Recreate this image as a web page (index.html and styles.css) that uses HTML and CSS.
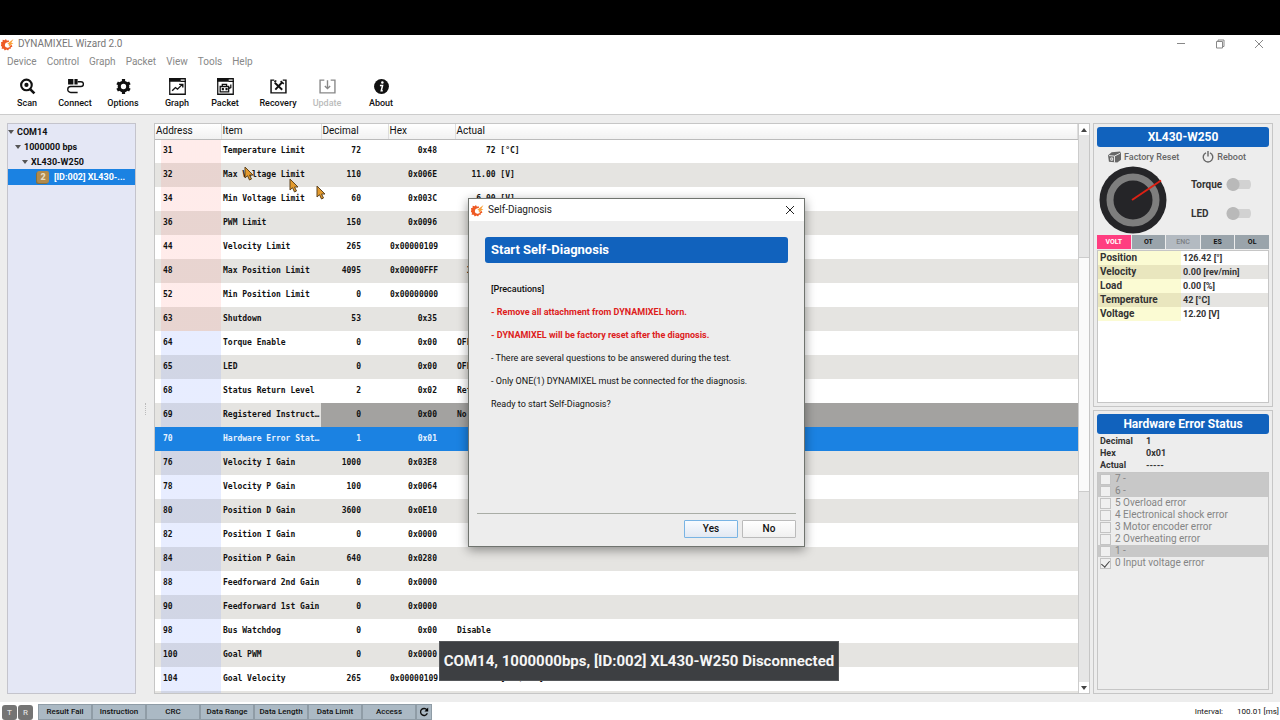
FILE: index.html
```html
<!DOCTYPE html>
<html lang="en">
<head>
<meta charset="utf-8">
<title>DYNAMIXEL Wizard 2.0</title>
<link rel="stylesheet" href="styles.css">
</head>
<body>
<svg class="defs" aria-hidden="true">
  <symbol id="logo" viewBox="0 0 24 24">
    <path d="M9 2l2 3 3-1 1 3-3 1a5 5 0 1 0 5 6l3-1 1 3-3 1 0 3-3 0-2 3-3-2-3 2-2-3-4 0 1-4-3-2 2-3-2-3 4-1 0-4 4 1z" fill="#ee5a24"/>
    <path d="M11 11l12-9-4 7 4 0-8 6z" fill="#f9a13a"/>
    <circle cx="11.500" cy="13" r="3" fill="#fff"/>
  </symbol>
  <symbol id="cursor" viewBox="0 0 10 15">
    <path d="M1 1v11l2.500-2.300L5.500 14l2-1-2-4H9z" fill="#e39a2d" stroke="#5f4520" stroke-width="1"/>
  </symbol>
</svg>
<div class="letterbox"></div>
<header class="titlebar">
  <svg class="logo"><use href="#logo"/></svg>
  <h1 class="title">DYNAMIXEL Wizard 2.0</h1>
  <div class="winbtns">
    <button aria-label="Minimize"><svg viewBox="0 0 10 10"><path d="M1 4.500h8"/></svg></button>
    <button aria-label="Restore"><svg viewBox="0 0 10 10"><path d="M1.500 2.500h6v6.500h-6zM3 2.500V1h6v6.500H7.500"/></svg></button>
    <button aria-label="Close"><svg viewBox="0 0 10 10"><path d="M1 1l8 8M9 1L1 9"/></svg></button>
  </div>
</header>
<nav class="menubar">
  <button>Device</button><button>Control</button><button>Graph</button><button>Packet</button><button>View</button><button>Tools</button><button>Help</button>
</nav>
<div class="toolbar">
  <button class="tool"><svg viewBox="0 0 16 16"><circle cx="7" cy="6.500" r="5" fill="none" stroke="#111" stroke-width="2"/><circle cx="7" cy="6.500" r="2"/><path d="M10.500 10.500l4 4" stroke="#111" stroke-width="2.500"/></svg>Scan</button>
  <button class="tool"><svg viewBox="0 0 16 16"><path d="M1 1h5v5H1zM7 1h3v5H7z"/><path d="M10 3.500h3.200a2.200 2.200 0 0 1 0 4.500H3.500a2.800 2.800 0 0 0 0 5.600H10" fill="none" stroke="#111" stroke-width="1.300"/></svg>Connect</button>
  <button class="tool"><svg viewBox="0 0 16 16"><circle cx="8" cy="8" r="4" fill="none" stroke="#111" stroke-width="3"/><path d="M8 1v3M8 12v3M2 4.500l2.600 1.500M11.400 10l2.600 1.500M2 11.500L4.600 10M11.400 6L14 4.500" stroke="#111" stroke-width="3"/></svg>Options</button>
  <span class="gap"></span>
  <button class="tool"><svg viewBox="0 0 16 16"><path d="M.700.700h14.600v14.600H.700z" fill="none" stroke="#111" stroke-width="1.200"/><path d="M0 0h11v3.500H0zM11 2.500h5v1.200h-5z"/><path d="M3 12l3-3 2 1.500 4.500-4.500M9.500 6H13v3" fill="none" stroke="#111" stroke-width="1.300"/></svg>Graph</button>
  <button class="tool"><svg viewBox="0 0 16 16"><path d="M.700.700h14.600v14.600H.700z" fill="none" stroke="#111" stroke-width="1.200"/><path d="M0 0h11v3.500H0zM11 2.500h5v1.200h-5z"/><path d="M3 8h8v5H3zM5 8V6h4v2M11 10l2-1V6" fill="none" stroke="#111" stroke-width="1.200"/><path d="M4.500 9.500h2v2h-2zM8 9.500h2v2H8z"/></svg>Packet</button>
  <button class="tool recovery"><svg viewBox="0 0 16 16"><path d="M4 2H1v12h14V2h-3" fill="none" stroke="#111" stroke-width="1.400"/><path d="M4.500 4.500l7 6.500M11.500 4L5 11" stroke="#111" stroke-width="1.800"/><path d="M4 3.500l2-1M10 3l3 2.500" stroke="#111" stroke-width="1.500"/></svg>Recovery</button>
  <button class="tool update" disabled><svg viewBox="0 0 16 16"><path d="M5 2H1v12h14V2h-4M8 2v7.500M5.500 7.500L8 10l2.500-2.500" fill="none" stroke="#888" stroke-width="1.300"/></svg>Update</button>
  <button class="tool about"><svg viewBox="0 0 16 16"><circle cx="8" cy="8" r="7"/><circle cx="8.800" cy="4.300" r="1.200" fill="#fff"/><path d="M6.500 7H9l-1.200 5H9.200" fill="none" stroke="#fff" stroke-width="1.400"/></svg>About</button>
</div>
<main class="work">
  <aside class="tree">
    <div class="node l1"><i class="caret"></i>COM14</div>
    <div class="node l2"><i class="caret"></i>1000000 bps</div>
    <div class="node l3"><i class="caret"></i>XL430-W250</div>
    <div class="node l4 active"><b class="chip">2</b>[ID:002] XL430-...</div>
  </aside>
  <div class="splitter"><i></i></div>
  <section class="grid">
    <div class="scroller">
    <table>
      <colgroup><col class="c1"><col class="c2"><col class="c3"><col class="c3"><col></colgroup>
      <thead><tr><th>Address</th><th>Item</th><th>Decimal</th><th>Hex</th><th>Actual</th></tr></thead>
      <tbody class="rom">
        <tr><td>31</td><td>Temperature Limit</td><td>72</td><td>0x48</td><td>      72 [°C]</td></tr>
        <tr><td>32</td><td>Max Voltage Limit</td><td>110</td><td>0x006E</td><td>   11.00 [V]</td></tr>
        <tr><td>34</td><td>Min Voltage Limit</td><td>60</td><td>0x003C</td><td>    6.00 [V]</td></tr>
        <tr><td>36</td><td>PWM Limit</td><td>150</td><td>0x0096</td><td></td></tr>
        <tr><td>44</td><td>Velocity Limit</td><td>265</td><td>0x00000109</td><td></td></tr>
        <tr><td>48</td><td>Max Position Limit</td><td>4095</td><td>0x00000FFF</td><td>  359.91 [°]</td></tr>
        <tr><td>52</td><td>Min Position Limit</td><td>0</td><td>0x00000000</td><td></td></tr>
        <tr><td>63</td><td>Shutdown</td><td>53</td><td>0x35</td><td></td></tr>
      </tbody>
      <tbody class="ram">
        <tr><td>64</td><td>Torque Enable</td><td>0</td><td>0x00</td><td>OFF</td></tr>
        <tr><td>65</td><td>LED</td><td>0</td><td>0x00</td><td>OFF</td></tr>
        <tr><td>68</td><td>Status Return Level</td><td>2</td><td>0x02</td><td>Return</td></tr>
        <tr class="locked"><td>69</td><td>Registered Instruct…</td><td>0</td><td>0x00</td><td>No</td></tr>
        <tr class="selected"><td>70</td><td>Hardware Error Stat…</td><td>1</td><td>0x01</td><td></td></tr>
        <tr><td>76</td><td>Velocity I Gain</td><td>1000</td><td>0x03E8</td><td></td></tr>
        <tr><td>78</td><td>Velocity P Gain</td><td>100</td><td>0x0064</td><td></td></tr>
        <tr><td>80</td><td>Position D Gain</td><td>3600</td><td>0x0E10</td><td></td></tr>
        <tr><td>82</td><td>Position I Gain</td><td>0</td><td>0x0000</td><td></td></tr>
        <tr><td>84</td><td>Position P Gain</td><td>640</td><td>0x0280</td><td></td></tr>
        <tr><td>88</td><td>Feedforward 2nd Gain</td><td>0</td><td>0x0000</td><td></td></tr>
        <tr><td>90</td><td>Feedforward 1st Gain</td><td>0</td><td>0x0000</td><td></td></tr>
        <tr><td>98</td><td>Bus Watchdog</td><td>0</td><td>0x00</td><td>Disable</td></tr>
        <tr><td>100</td><td>Goal PWM</td><td>0</td><td>0x0000</td><td></td></tr>
        <tr><td>104</td><td>Goal Velocity</td><td>265</td><td>0x00000109</td><td>   60.69 [rev/min]</td></tr>
        <tr><td></td><td></td><td></td><td></td><td></td></tr>
      </tbody>
    </table>
    </div>
    <div class="scrollbar"><button aria-label="Scroll up"><i class="up"></i></button><span class="track"><span class="thumb"></span></span><button aria-label="Scroll down"><i class="down"></i></button></div>
  </section>
  <div class="side">
    <section class="panel">
      <h2 class="banner">XL430-W250</h2>
      <div class="actions">
        <button><svg class="box" viewBox="0 0 14 12"><path d="M0 4l4-3 9-1 1 2v7l-4 3-9-1z" fill="#666"/><path d="M1 4.500l6 .500v7M7 5l6-3M3 7h2v2.500H3z" fill="none" stroke="#eee"/></svg>Factory Reset</button>
        <button><svg class="power" viewBox="0 0 12 12"><path d="M4 1.800a4.800 4.800 0 1 0 4 0M6 0v5.500" fill="none" stroke="#666" stroke-width="1.400"/></svg>Reboot</button>
      </div>
      <div class="status">
        <svg class="dial" viewBox="0 0 68 68"><circle cx="34" cy="34" r="33.500" fill="#252528"/><circle cx="34" cy="34" r="23" fill="#252528" stroke="#7e7e7e" stroke-width="7"/><path d="M33 34L62 14.500" stroke="#dc2114" stroke-width="2"/></svg>
        <div class="switches">
          <label>Torque<input type="checkbox"></label>
          <label>LED<input type="checkbox"></label>
        </div>
      </div>
      <div class="flags"><span class="on">VOLT</span><span>OT</span><span class="off">ENC</span><span>ES</span><span>OL</span></div>
      <div class="readout">
        <table>
          <tr><th>Position</th><td>126.42 [°]</td></tr>
          <tr><th>Velocity</th><td>0.00 [rev/min]</td></tr>
          <tr><th>Load</th><td>0.00 [%]</td></tr>
          <tr><th>Temperature</th><td>42 [°C]</td></tr>
          <tr><th>Voltage</th><td>12.20 [V]</td></tr>
        </table>
      </div>
    </section>
    <section class="panel">
      <h2 class="banner">Hardware Error Status</h2>
      <dl class="values"><dt>Decimal</dt><dd>1</dd><dt>Hex</dt><dd>0x01</dd><dt>Actual</dt><dd>-----</dd></dl>
      <div class="bits">
        <label class="na"><input type="checkbox" disabled>7 -</label>
        <label class="na"><input type="checkbox" disabled>6 -</label>
        <label><input type="checkbox" disabled>5 Overload error</label>
        <label><input type="checkbox" disabled>4 Electronical shock error</label>
        <label><input type="checkbox" disabled>3 Motor encoder error</label>
        <label><input type="checkbox" disabled>2 Overheating error</label>
        <label class="na"><input type="checkbox" disabled>1 -</label>
        <label><input type="checkbox" checked disabled>0 Input voltage error</label>
      </div>
    </section>
  </div>
</main>
<footer class="statusbar">
  <b class="led">T</b><b class="led">R</b>
  <div class="counters">
    <span>Result Fail</span><span>Instruction</span><span>CRC</span><span>Data Range</span><span>Data Length</span><span>Data Limit</span><span>Access</span>
    <button aria-label="Reset counters"><svg viewBox="0 0 12 12"><path d="M9.500 3.500A4.200 4.200 0 1 0 10 7.500" fill="none" stroke="#111" stroke-width="1.600"/><path d="M11 .500v4.800H6.500z"/></svg></button>
  </div>
  <span class="interval">Interval:</span><span>100.01 [ms]</span>
</footer>
<svg class="cursor p1"><use href="#cursor"/></svg>
<svg class="cursor p2"><use href="#cursor"/></svg>
<svg class="cursor p3"><use href="#cursor"/></svg>
<div class="dialog" role="dialog" aria-labelledby="dlg">
  <div class="dialog-title"><svg class="logo"><use href="#logo"/></svg><span id="dlg">Self-Diagnosis</span>
    <button aria-label="Close dialog"><svg viewBox="0 0 10 10"><path d="M1 1l8 8M9 1L1 9"/></svg></button></div>
  <div class="dialog-body">
    <h2>Start Self-Diagnosis</h2>
    <div class="copy">
      <p class="strong">[Precautions]</p>
      <p class="warn">- Remove all attachment from DYNAMIXEL horn.</p>
      <p class="warn">- DYNAMIXEL will be factory reset after the diagnosis.</p>
      <p>- There are several questions to be answered during the test.</p>
      <p>- Only ONE(1) DYNAMIXEL must be connected for the diagnosis.</p>
      <p>Ready to start Self-Diagnosis?</p>
    </div>
    <div class="buttons"><button class="primary">Yes</button><button>No</button></div>
  </div>
</div>
<div class="toast" role="status">COM14, 1000000bps, [ID:002] XL430-W250 Disconnected</div>
</body>
</html>
```
FILE: styles.css
```css
* { box-sizing: border-box; }
body { margin: 0; height: 100vh; display: flex; flex-direction: column; position: relative; overflow: hidden; background: #fff; color: #111; font: 10px/14px Roboto, "Liberation Sans", sans-serif; }
button { border: 0; background: none; padding: 0; margin: 0; font: inherit; color: inherit; }
h1, h2, p, dl, dd { margin: 0; font-size: inherit; }
svg { display: block; }
.defs { position: absolute; width: 0; height: 0; }
.letterbox { flex: none; height: 35px; background: #000; }
.logo { width: 13px; height: 13px; flex: none; }

.titlebar { flex: none; display: flex; align-items: center; height: 18px; padding: 0 2px 0 1px; gap: 4px; }
.title { font-size: 10px; font-weight: 400; color: #777; }
.winbtns { margin-left: auto; display: flex; }
.winbtns button { width: 39px; display: flex; justify-content: center; }
.winbtns svg, .dialog-title button svg { width: 10px; height: 10px; fill: none; stroke: #888; stroke-width: 1; }
.menubar { flex: none; display: flex; gap: 10px; padding: 0 7px; height: 17px; line-height: 17px; font-size: 10px; color: #888; }
.toolbar { flex: none; display: flex; height: 45px; padding: 8px 3px 0; border-bottom: 1px solid #ccc; }
.tool { width: 48px; display: flex; flex-direction: column; align-items: center; gap: 1px; font-size: 9px; line-height: 14px; font-weight: 500; }
.tool svg { width: 17px; height: 17px; fill: #111; }
.tool:disabled { color: #bbb; }
.tool.recovery { width: 58px; }
.tool.update { width: 40px; }
.tool.about { margin-left: 10px; }
.gap { width: 6px; }

.work { flex: 1; min-height: 0; display: flex; padding: 8px 7px; background: #ededed; }
.tree { width: 129px; flex: none; border: 1px solid #c4c4cc; background: #e4e7f5; font-size: 9px; font-weight: 700; }
.node { display: flex; align-items: center; height: 15px; gap: 3px; white-space: nowrap; }
.l1 { padding-left: 0; }
.l2 { padding-left: 7px; }
.l3 { padding-left: 14px; }
.l4 { padding-left: 29px; gap: 5px; height: 16px; }
.active { background: #1b82e2; color: #fff; }
.caret { border: 3px solid transparent; border-top: 4px solid #555; border-bottom: 0; }
.chip { width: 12px; height: 12px; border-radius: 2px; background: #b18a4b; box-shadow: -1px 1px #84703f; color: #e8ddc0; font-size: 9px; line-height: 12px; text-align: center; }
.splitter { flex: none; width: 18px; display: flex; align-items: center; justify-content: center; }
.splitter i { height: 12px; border-left: 1px dotted #bbb; }

.grid { flex: 1; min-width: 0; display: flex; border: 1px solid #c6c6c6; background: #fff; }
.scroller { flex: 1; min-width: 0; overflow: hidden; }
.scroller table { width: 100%; table-layout: fixed; border-collapse: collapse; }
.c1 { width: 66px; }
.c2 { width: 100px; }
.c3 { width: 67px; }
.scroller th { height: 15px; padding: 0 0 0 1px; text-align: left; font-size: 10px; line-height: 14px; font-weight: 400; background: linear-gradient(#fff, #f1f1f1); border-right: 1px solid #ddd; border-bottom: 1px solid #bbb; }
.scroller td { height: 24px; padding: 0 2px; font: 700 8px/12px "DejaVu Sans Mono", "Liberation Mono", monospace; white-space: pre; overflow: hidden; }
.scroller td:nth-child(1) { padding-left: 8px; }
.scroller td:nth-child(3) { text-align: right; padding-right: 27px; }
.scroller td:nth-child(4) { text-align: right; padding-right: 18px; }
.scroller tbody tr:nth-child(even) { background: #e5e4e1; }
.rom td:first-child { background: linear-gradient(90deg, transparent 6px, #ff6e6422 6px); }
.ram td:first-child { background: linear-gradient(90deg, transparent 6px, #5078ff22 6px); }
.locked td:nth-child(n+3) { background: #a3a2a0; }
.scroller .selected td { background: #1b82e2; color: #e8f3ff; }

.scrollbar { flex: none; width: 11px; display: flex; flex-direction: column; background: #e6e6e6; border-left: 1px solid #ccc; }
.scrollbar button { height: 11px; display: flex; align-items: center; justify-content: center; background: #fff; }
.up, .down { border: 3px solid transparent; }
.up { border-bottom: 4px solid #444; border-top: 0; }
.down { border-top: 4px solid #444; border-bottom: 0; }
.track { flex: 1; display: flex; flex-direction: column; }
.track::before { content: ""; flex: 9; }
.track::after { content: ""; flex: 14; }
.thumb { height: 43%; background: #fafafa; border: 1px solid #ccc; border-width: 1px 0; }

.side { flex: none; width: 180px; margin-left: 3px; display: flex; flex-direction: column; gap: 3px; }
.panel { flex: 1; min-height: 0; display: flex; flex-direction: column; padding: 3px; border: 1px solid #c6c6c6; }
.banner { height: 20px; flex: none; border-radius: 3px; background: #1162bd; color: #fff; font-size: 12px; line-height: 20px; font-weight: 700; text-align: center; }
.actions { display: flex; justify-content: space-between; height: 19px; padding: 0 23px 0 11px; font-size: 9px; color: #666; font-weight: 500; }
.actions button { display: flex; align-items: center; gap: 3px; }
.box { width: 13px; height: 12px; }
.power { width: 12px; height: 12px; }
.status { display: flex; height: 69px; padding-left: 2px; gap: 24px; }
.dial { width: 68px; height: 68px; flex: none; }
.switches { display: flex; flex-direction: column; gap: 16px; padding-top: 12px; font-weight: 700; color: #333; }
.switches label { display: flex; align-items: center; justify-content: space-between; width: 60px; height: 13px; }
.switches input { appearance: none; margin: 0; width: 25px; height: 13px; background: radial-gradient(circle at 7px 50%, #b9b9b9 6px, transparent 7px), linear-gradient(#d2d2d2, #d2d2d2) 7px 2px / 18px 9px no-repeat; border-radius: 6px; }
.flags { display: flex; gap: 1px; height: 14px; flex: none; }
.flags span { flex: 1; background: #9aa4ab; font-size: 7px; line-height: 14px; font-weight: 700; text-align: center; }
.flags .on { background: #ff3d80; color: #fff; }
.flags .off { background: #b3bac1; color: #7b8085; font-weight: 500; }
.readout { flex: 1; margin-top: 1px; border: 1px solid #c6c6c6; background: #fff; color: #333; }
.readout table { width: 100%; border-collapse: collapse; }
.readout th { width: 83px; background: #fbfbd3; text-align: left; }
.readout th, .readout td { height: 14px; padding: 0 2px; font-weight: 700; line-height: 14px; }
.readout td { font-size: 9px; }
.readout tr:nth-child(even) th { background: #e9e6be; }
.readout tr:nth-child(even) td { background: #e5e4e1; }
.values { display: grid; grid-template-columns: 46px 1fr; padding: 1px 3px; line-height: 12px; font-size: 9px; font-weight: 700; color: #333; }
.bits { flex: 1; border: 1px solid #c6c6c6; font-size: 10px; color: #858585; }
.bits label { display: flex; align-items: center; gap: 4px; height: 12px; padding-left: 2px; line-height: 12px; }
.bits .na { background: #c8c8c8; }
.bits input { appearance: none; margin: 0; width: 11px; height: 11px; border: 1px solid #c4c4c4; background: #f0f0f0; display: flex; justify-content: center; align-items: flex-start; }
.bits input:checked::before { content: ""; flex: none; width: 4px; height: 7px; border: solid #444; border-width: 0 1px 1px 0; transform: rotate(40deg); }

.statusbar { flex: none; height: 18px; display: flex; align-items: center; padding: 2px 1px 0 2px; gap: 1px; font-size: 8px; }
.led { width: 15px; height: 15px; border-radius: 3px; background: #747474; color: #ddd; font-weight: 500; line-height: 15px; text-align: center; }
.counters { display: flex; margin-left: 4px; }
.counters span, .counters button { height: 16px; width: 54px; border: 1px solid #8f9ca6; background: #abb9c4; line-height: 14px; text-align: center; font-weight: 500; }
.counters button { width: 16px; display: grid; place-items: center; }
.counters svg { width: 10px; height: 10px; }
.interval { margin-left: auto; margin-right: 13px; }

.cursor { position: absolute; width: 10px; height: 15px; }
.p1 { left: 244px; top: 166px; }
.p2 { left: 289px; top: 178px; }
.p3 { left: 316px; top: 185px; }

.dialog { position: absolute; left: 468px; top: 198px; width: 337px; height: 349px; display: flex; flex-direction: column; border: 1px solid #70746f; background: #ededed; box-shadow: 0 3px 10px #0006; }
.dialog-title { display: flex; align-items: center; gap: 4px; height: 22px; flex: none; padding: 0 9px 0 2px; background: #fff; font-size: 10px; color: #222; }
.dialog-title button { margin-left: auto; }
.dialog-title button svg { stroke: #222; }
.dialog-body { flex: 1; display: flex; flex-direction: column; padding: 16px 8px 8px; }
.dialog-body h2 { height: 26px; margin: 0 8px; padding-left: 6px; border-radius: 3px; background: #1162bd; color: #fff; font-size: 13px; line-height: 26px; }
.copy { display: flex; flex-direction: column; gap: 9px; padding: 19px 14px; font-size: 9px; }
.strong { font-weight: 500; }
.warn { font-weight: 700; color: #dd1c1c; }
.buttons { display: flex; justify-content: flex-end; gap: 4px; margin-top: auto; padding-top: 6px; border-top: 1px solid #a9ada6; }
.buttons button { width: 54px; height: 18px; border: 1px solid #bbb; border-radius: 1px; background: linear-gradient(#fff, #f0f0f0); font-size: 10px; font-weight: 500; line-height: 16px; }
.buttons .primary { border-color: #79b4e4; background: linear-gradient(#f8fbff, #e2e8f2); }
.toast { position: absolute; left: 439px; top: 641px; width: 400px; height: 40px; border: 1px solid #55575a; background: #3d3f42; color: #f5f5f5; font-size: 15px; line-height: 38px; font-weight: 700; text-align: center; white-space: nowrap; }
```
